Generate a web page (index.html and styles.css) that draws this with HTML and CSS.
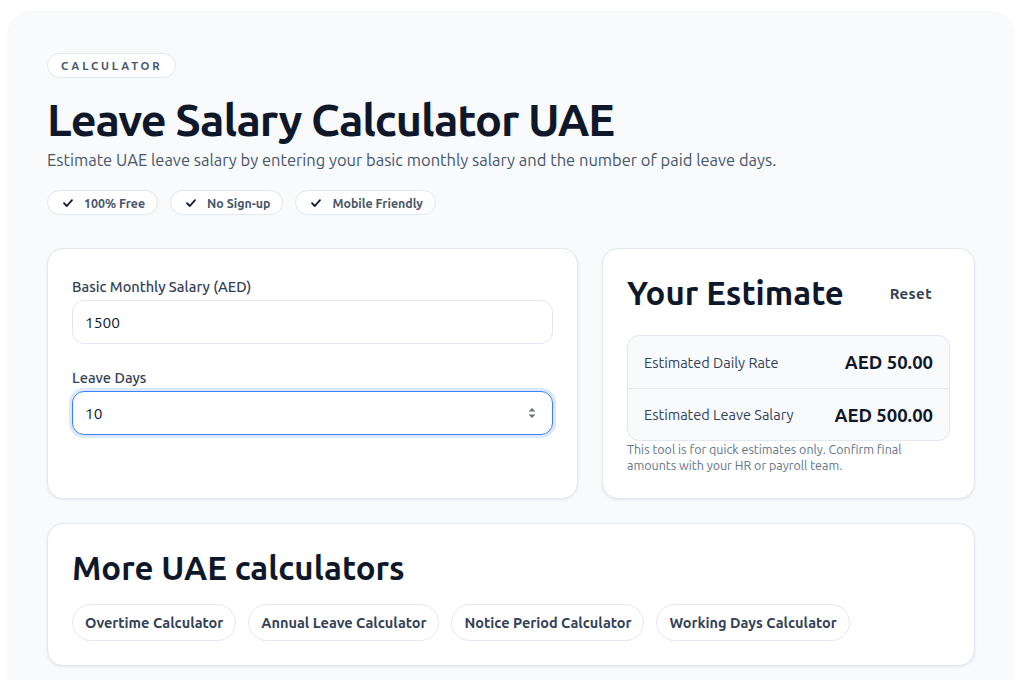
FILE: index.html
```html
<!DOCTYPE html>
<html lang="en">
<head>
<meta charset="utf-8">
<title>Leave Salary Calculator UAE</title>
<link rel="stylesheet" href="styles.css">
</head>
<body>
<main class="shell">
  <span class="eyebrow">CALCULATOR</span>
  <h1 class="title">Leave Salary Calculator UAE</h1>
  <p class="lead">Estimate UAE leave salary by entering your basic monthly salary and the number of paid leave days.</p>
  <ul class="perks">
    <li class="perk"><svg class="check" viewBox="0 0 12 12" width="12" height="12"><path d="M2 6.2 4.8 9 10 3.2" fill="none" stroke="#0f172a" stroke-width="1.8" stroke-linecap="round" stroke-linejoin="round"/></svg>100% Free</li>
    <li class="perk"><svg class="check" viewBox="0 0 12 12" width="12" height="12"><path d="M2 6.2 4.8 9 10 3.2" fill="none" stroke="#0f172a" stroke-width="1.8" stroke-linecap="round" stroke-linejoin="round"/></svg>No Sign-up</li>
    <li class="perk"><svg class="check" viewBox="0 0 12 12" width="12" height="12"><path d="M2 6.2 4.8 9 10 3.2" fill="none" stroke="#0f172a" stroke-width="1.8" stroke-linecap="round" stroke-linejoin="round"/></svg>Mobile Friendly</li>
  </ul>

  <section class="grid">
    <div class="card form-card">
      <div class="field">
        <label class="label" for="salary">Basic Monthly Salary (AED)</label>
        <div class="input-box">
          <input class="input" id="salary" type="text" value="1500">
        </div>
      </div>
      <div class="field">
        <label class="label" for="days">Leave Days</label>
        <div class="input-box focused">
          <input class="input" id="days" type="text" value="10">
          <svg class="spin" viewBox="0 0 10 14" width="10" height="14"><path d="M1.5 5.5 5 2l3.5 3.5z M1.5 8.5 5 12l3.5-3.5z" fill="#6b7280"/></svg>
        </div>
      </div>
    </div>

    <div class="card result-card">
      <div class="result-head">
        <h2 class="h2">Your Estimate</h2>
        <button class="reset" type="button">Reset</button>
      </div>
      <div class="results">
        <div class="row"><span class="row-label">Estimated Daily Rate</span><span class="row-value">AED 50.00</span></div>
        <div class="row"><span class="row-label">Estimated Leave Salary</span><span class="row-value">AED 500.00</span></div>
      </div>
      <p class="note">This tool is for quick estimates only. Confirm final amounts with your HR or payroll team.</p>
    </div>
  </section>

  <section class="card more">
    <h2 class="h2 more-title">More UAE calculators</h2>
    <div class="links">
      <a class="link" href="#">Overtime Calculator</a>
      <a class="link" href="#">Annual Leave Calculator</a>
      <a class="link" href="#">Notice Period Calculator</a>
      <a class="link" href="#">Working Days Calculator</a>
    </div>
  </section>
</main>
</body>
</html>
```

FILE: styles.css
```css
* { box-sizing: border-box; }
html, body { margin: 0; background: #ffffff; }
body {
  padding: 11px 7px;
  font-family: "Ubuntu", "Noto Sans", "Open Sans", sans-serif;
  color: #0f172a;
}
.shell {
  background: #f8fafc;
  border-radius: 24px;
  padding: 42px 40px 40px;
  min-height: 700px;
}
.eyebrow {
  display: inline-block;
  height: 25px;
  line-height: 23px;
  padding: 0 12px 0 13px;
  border: 1px solid #e2e8f0;
  border-radius: 999px;
  background: #ffffff;
  color: #475569;
  font-size: 11.3px;
  font-weight: 700;
  letter-spacing: 2.85px;
}
.title {
  margin: 18px 0 0;
  font-size: 45px;
  line-height: 48px;
  font-weight: 700;
  letter-spacing: -1.1px;
  color: #0f172a;
}
.lead {
  margin: 4px 0 0;
  font-size: 16.5px;
  line-height: 24px;
  color: #475569;
}
.perks {
  display: flex;
  gap: 12px;
  list-style: none;
  margin: 18px 0 0;
  padding: 0;
}
.perk {
  display: flex;
  align-items: center;
  gap: 10px;
  height: 25px;
  padding: 0 12px 0 14px;
  border: 1px solid #e2e8f0;
  border-radius: 999px;
  background: #ffffff;
  color: #475569;
  font-size: 12.4px;
  font-weight: 700;
}
.check { flex: none; }
.grid {
  display: grid;
  grid-template-columns: 531fr 373fr;
  gap: 24px;
  margin-top: 33px;
}
.card {
  background: #ffffff;
  border: 1px solid #e2e8f0;
  border-radius: 16px;
  box-shadow: 0 1px 3px rgba(15, 23, 42, 0.08);
  padding: 24px;
}
.form-card { padding-top: 28px; }
.result-card { padding-bottom: 25px; }
.field + .field { margin-top: 24px; }
.label {
  display: block;
  margin-bottom: 3px;
  font-size: 14.6px;
  line-height: 20px;
  font-weight: 500;
  color: #334155;
}
.input-box {
  display: flex;
  align-items: center;
  height: 44px;
  border: 1px solid #e2e8f0;
  border-radius: 12px;
  background: #ffffff;
  padding: 0 12px 0 12px;
}
.input-box.focused {
  border-color: #3b82f6;
  box-shadow: 0 0 0 3px rgba(59, 130, 246, 0.18);
}
.input {
  flex: 1;
  min-width: 0;
  border: 0;
  outline: none;
  background: transparent;
  font-family: inherit;
  font-size: 15.5px;
  color: #0f172a;
  padding: 0;
}
.spin { flex: none; margin-right: 3px; }
.result-head {
  display: flex;
  align-items: center;
  justify-content: space-between;
  margin-bottom: 22px;
}
.h2 {
  margin: 0;
  font-size: 33px;
  line-height: 40px;
  font-weight: 700;
  color: #0f172a;
}
.reset {
  border: 0;
  background: transparent;
  padding: 8px 18px;
  font-family: inherit;
  font-size: 15px;
  letter-spacing: 0.4px;
  font-weight: 700;
  color: #334155;
}
.results {
  border: 1px solid #e2e8f0;
  border-radius: 12px;
  background: #f8fafc;
}
.row {
  display: flex;
  align-items: center;
  justify-content: space-between;
  height: 52px;
  padding: 0 16px;
}
.row + .row { border-top: 1px solid #e2e8f0; }
.row-label {
  font-size: 14.5px;
  color: #334155;
}
.row-value {
  font-size: 18.5px;
  font-weight: 700;
  color: #0f172a;
}
.note {
  margin: 0;
  font-size: 12.5px;
  line-height: 16px;
  color: #64748b;
}
.more { margin-top: 24px; }
.more-title { margin-bottom: 16px; }
.links {
  display: flex;
  flex-wrap: wrap;
  gap: 12px;
}
.link {
  display: inline-flex;
  align-items: center;
  height: 37px;
  padding: 0 12px;
  border: 1px solid #e2e8f0;
  border-radius: 999px;
  background: #ffffff;
  color: #334155;
  font-size: 14.5px;
  font-weight: 700;
  text-decoration: none;
}
```
